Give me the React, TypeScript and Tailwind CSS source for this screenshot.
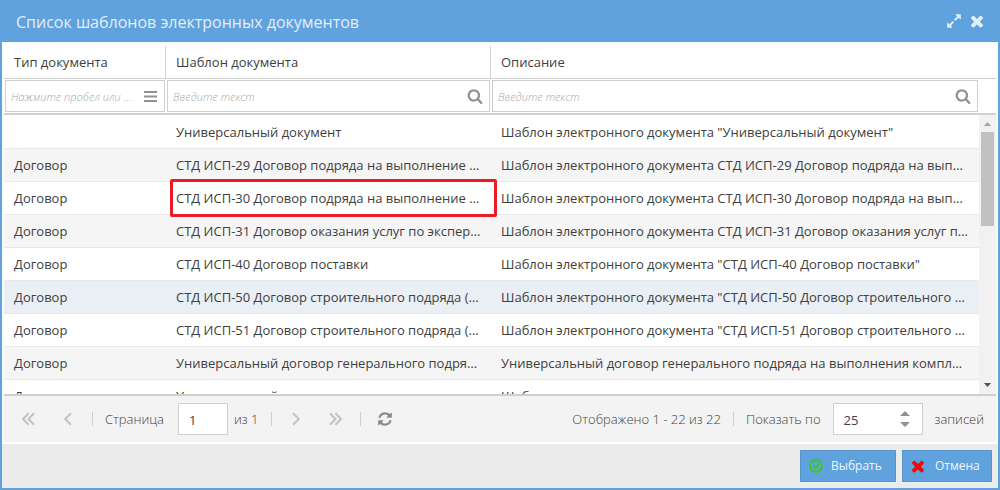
import React, { useState } from "react";
import clsx from "clsx";

interface Template {
  type: string;
  name: string;
  description: string;
}

const templates: Template[] = [
  {
    type: "",
    name: "Универсальный документ",
    description: 'Шаблон электронного документа "Универсальный документ"',
  },
  {
    type: "Договор",
    name: "СТД ИСП-29 Договор подряда на выполнение проектных работ",
    description: "Шаблон электронного документа СТД ИСП-29 Договор подряда на выполнение проектных работ",
  },
  {
    type: "Договор",
    name: "СТД ИСП-30 Договор подряда на выполнение проектных работ",
    description: "Шаблон электронного документа СТД ИСП-30 Договор подряда на выполнение проектных работ",
  },
  {
    type: "Договор",
    name: "СТД ИСП-31 Договор оказания услуг по экспертизе",
    description: "Шаблон электронного документа СТД ИСП-31 Договор оказания услуг по экспертизе",
  },
  {
    type: "Договор",
    name: "СТД ИСП-40 Договор поставки",
    description: 'Шаблон электронного документа "СТД ИСП-40 Договор поставки"',
  },
  {
    type: "Договор",
    name: "СТД ИСП-50 Договор строительного подряда (генподряд)",
    description: 'Шаблон электронного документа "СТД ИСП-50 Договор строительного подряда (генподряд)"',
  },
  {
    type: "Договор",
    name: "СТД ИСП-51 Договор строительного подряда (субподряд)",
    description: 'Шаблон электронного документа "СТД ИСП-51 Договор строительного подряда (субподряд)"',
  },
  {
    type: "Договор",
    name: "Универсальный договор генерального подряда",
    description: "Универсальный договор генерального подряда на выполнения комплекса работ",
  },
  {
    type: "Договор",
    name: "Универсальный договор",
    description: "Шаблон универсального договора",
  },
];

const MARKED_ROW = 2;

const icons = {
  search:
    "M1216 832q0-185-131.5-316.5t-316.5-131.5-316.5 131.5-131.5 316.5 131.5 316.5 316.5 131.5 316.5-131.5 131.5-316.5zm512 832q0 52-38 90t-90 38q-54 0-90-38l-343-342q-179 124-399 124-143 0-273.5-55.5t-225-150-150-225-55.5-273.5 55.5-273.5 150-225 225-150 273.5-55.5 273.5 55.5 225 150 150 225 55.5 273.5q0 220-124 399l343 343q37 37 37 90z",
  times:
    "M1490 1322q0 40-28 68l-136 136q-28 28-68 28t-68-28l-294-294-294 294q-28 28-68 28t-68-28l-136-136q-28-28-28-68t28-68l294-294-294-294q-28-28-28-68t28-68l136-136q28-28 68-28t68 28l294 294 294-294q28-28 68-28t68 28l136 136q28 28 28 68t-28 68l-294 294 294 294q28 28 28 68z",
  refresh:
    "M1639 1056q0 5-1 7-64 268-268 434.5t-478 166.5q-146 0-282.5-55t-243.5-157l-129 129q-19 19-45 19t-45-19-19-45v-448q0-26 19-45t45-19h448q26 0 45 19t19 45-19 45l-137 137q71 66 161 102t187 36q134 0 250-65t186-179q11-17 53-117 8-23 30-23h192q13 0 22.5 9.5t9.5 22.5zm25-800v448q0 26-19 45t-45 19h-448q-26 0-45-19t-19-45 19-45l138-138q-148-137-349-137-134 0-250 65t-186 179q-11 17-53 117-8 23-30 23h-199q-13 0-22.5-9.5t-9.5-22.5v-7q65-268 270-434.5t480-166.5q146 0 284 55.5t245 156.5l130-129q19-19 45-19t45 19 19 45z",
  expand:
    "M883 1056q0 13-10 23l-332 332 144 144q19 19 19 45t-19 45-45 19h-448q-26 0-45-19t-19-45v-448q0-26 19-45t45-19 45 19l144 144 332-332q10-10 23-10t23 10l114 114q10 10 10 23zm781-864v448q0 26-19 45t-45 19-45-19l-144-144-332 332q-10 10-23 10t-23-10l-114-114q-10-10-10-23t10-23l332-332-144-144q-19-19-19-45t19-45 45-19h448q26 0 45 19t19 45z",
};

const Icon: React.FC<{ name: keyof typeof icons; className?: string }> = ({ name, className }) => (
  <svg viewBox="0 0 1792 1792" fill="currentColor" className={className}>
    <path d={icons[name]} />
  </svg>
);

const Chevrons: React.FC<{ double?: boolean; right?: boolean }> = ({ double, right }) => (
  <svg
    viewBox="0 0 14 14"
    fill="none"
    stroke="currentColor"
    strokeWidth="2"
    className={clsx("size-3.5", right && "rotate-180")}
  >
    {double ? <path d="M7.500 1.200 2 7l5.500 5.800M13 1.200 7.500 7l5.500 5.800" /> : <path d="M10 1.200 4.200 7l5.800 5.800" />}
  </svg>
);

const Separator = () => <div className="h-3.5 w-px shrink-0 bg-[#cfcfcf]" />;

const PagerButton: React.FC<{ label: string; children: React.ReactNode }> = ({ label, children }) => (
  <button type="button" aria-label={label} className="flex size-8 items-center justify-center text-[#c3c3c3]">
    {children}
  </button>
);

const HeaderCell: React.FC<{ children: React.ReactNode; last?: boolean }> = ({ children, last }) => (
  <th
    className={clsx(
      "h-[33px] border-b border-[#cfd1d0] px-2.5 text-left leading-5 font-normal",
      !last && "border-r"
    )}
  >
    {children}
  </th>
);

const FilterCell: React.FC<{ label: string; placeholder: string; list?: boolean }> = ({
  label,
  placeholder,
  list,
}) => (
  <td className="border-b-2 border-[#cfd1d0] p-px">
    <div className="flex h-8 items-center border border-[#cfd1d0] pr-1.5 pl-[5px]">
      <input
        type="text"
        aria-label={label}
        placeholder={placeholder}
        className="min-w-0 flex-1 pt-0.5 text-[11px] leading-5 font-light text-ellipsis italic outline-none placeholder:text-[#a8a8a8]"
      />
      <button type="button" aria-label="Поиск" className="ml-3 shrink-0 text-[#919191]">
        {list ? (
          <svg viewBox="0 0 14 14" fill="currentColor" className="size-3.5">
            <path d="M0 2h13v2H0zM0 6.500h13v2H0zM0 11h13v2H0z" />
          </svg>
        ) : (
          <Icon name="search" className="size-4" />
        )}
      </button>
    </div>
  </td>
);

const App: React.FC = () => {
  const [page, setPage] = useState("1");
  const [pageSize, setPageSize] = useState(25);

  return (
    <div className="flex h-screen flex-col border-2 border-t-0 border-[#5fa2dd] bg-white font-['Open_Sans','Noto_Sans',sans-serif] text-[13px] leading-5 text-[#404040]">
      <header className="flex h-[42px] shrink-0 items-center gap-1.5 bg-[#5fa2dd] pr-3 pl-3.5 text-[#e3eef9]">
        <h1 className="flex-1 pt-0.5 text-base font-medium">Список шаблонов электронных документов</h1>
        <button type="button" aria-label="Развернуть">
          <Icon name="expand" className="size-4" />
        </button>
        <button type="button" aria-label="Закрыть">
          <Icon name="times" className="size-[18px]" />
        </button>
      </header>

      <main className="flex min-h-0 flex-1 flex-col px-0.5 pt-1 pb-0.5">
        <table className="w-full shrink-0 table-fixed border-separate border-spacing-0">
          <colgroup>
            <col className="w-[162px]" />
            <col className="w-[325px]" />
            <col />
            <col className="w-[17px]" />
          </colgroup>
          <thead>
            <tr>
              <HeaderCell>Тип документа</HeaderCell>
              <HeaderCell>Шаблон документа</HeaderCell>
              <HeaderCell last>Описание</HeaderCell>
              <td className="border-b border-[#cfd1d0]" />
            </tr>
            <tr>
              <FilterCell label="Тип документа" placeholder="Нажмите пробел или выберите" list />
              <FilterCell label="Шаблон документа" placeholder="Введите текст" />
              <FilterCell label="Описание" placeholder="Введите текст" />
              <td className="border-b-2 border-[#cfd1d0]" />
            </tr>
          </thead>
        </table>

        <div className="flex min-h-0 flex-1">
          <div className="min-w-0 flex-1 overflow-hidden pt-px">
            <table className="w-full table-fixed border-separate border-spacing-0">
              <colgroup>
                <col className="w-[162px]" />
                <col className="w-[325px]" />
                <col />
              </colgroup>
              <tbody>
                {templates.map((item, index) => (
                  <tr key={index} className={clsx(index === 5 ? "bg-[#e9eff4]" : index % 2 && "bg-[#f5f5f5]")}>
                    <td className="h-[33px] border-b border-[#e8e8e8] px-2.5">{item.type}</td>
                    <td className="relative h-[33px] border-b border-[#e8e8e8] px-2.5">
                      <div className="truncate">{item.name}</div>
                      {index === MARKED_ROW && (
                        <div className="absolute -top-[3px] -right-1.5 -bottom-[3px] left-1 z-10 rounded-xs border-3 border-[#ed1c24]" />
                      )}
                    </td>
                    <td className="h-[33px] border-b border-[#e8e8e8] px-2.5">
                      <div className="truncate">{item.description}</div>
                    </td>
                  </tr>
                ))}
              </tbody>
            </table>
          </div>
          <div className="flex w-[17px] flex-col items-center bg-[#f1f1f1]">
            <svg viewBox="0 0 17 17" className="size-[17px] shrink-0 fill-[#a3a3a3]">
              <path d="M5 11h7L8.500 7z" />
            </svg>
            <div className="h-[94px] w-[13px] bg-[#c1c1c1]" />
            <svg viewBox="0 0 17 17" className="mt-auto size-[17px] shrink-0 fill-[#505050]">
              <path d="M5 6h7L8.500 10z" />
            </svg>
          </div>
        </div>

        <div className="flex h-12 shrink-0 items-center border-t-2 border-[#cfcfcf] bg-[#f3f3f3] px-2 font-light text-[#404040]">
          <PagerButton label="Первая страница">
            <Chevrons double />
          </PagerButton>
          <div className="w-2" />
          <PagerButton label="Предыдущая страница">
            <Chevrons />
          </PagerButton>
          <div className="w-2" />
          <Separator />
          <label htmlFor="page" className="ml-3 w-[73px]">
            Страница
          </label>
          <input
            id="page"
            value={page}
            onChange={(e) => setPage(e.target.value)}
            className="h-8 w-[50px] border border-[#cfcfcf] bg-white px-2.5 pt-0.5 font-normal text-[#404040] outline-none"
          />
          <span className="ml-1.5 w-[37px]">из 1</span>
          <Separator />
          <div className="w-2" />
          <PagerButton label="Следующая страница">
            <Chevrons right />
          </PagerButton>
          <div className="w-2" />
          <PagerButton label="Последняя страница">
            <Chevrons double right />
          </PagerButton>
          <div className="w-2" />
          <Separator />
          <button type="button" aria-label="Обновить" className="ml-4 text-[#8a8a8a]">
            <Icon name="refresh" className="size-4" />
          </button>
          <span className="mr-3 ml-auto">Отображено 1 - 22 из 22</span>
          <Separator />
          <label htmlFor="page-size" className="mr-3 ml-3">
            Показать по
          </label>
          <div className="mr-3 flex h-8 w-[90px] items-center border border-[#cfcfcf] bg-white pr-3 pl-2.5">
            <input
              id="page-size"
              value={pageSize}
              onChange={(e) => setPageSize(Number(e.target.value) || 0)}
              className="min-w-0 flex-1 pt-0.5 font-normal text-[#404040] outline-none"
            />
            <div className="flex flex-col gap-1.5 text-[#919191]">
              <button type="button" aria-label="Больше" onClick={() => setPageSize(pageSize + 1)}>
                <svg viewBox="0 0 10 5" fill="currentColor" className="h-[5px] w-2.5">
                  <path d="M0 5h10L5 0z" />
                </svg>
              </button>
              <button type="button" aria-label="Меньше" onClick={() => setPageSize(pageSize - 1)}>
                <svg viewBox="0 0 10 5" fill="currentColor" className="h-[5px] w-2.5">
                  <path d="M0 0h10L5 5z" />
                </svg>
              </button>
            </div>
          </div>
          <span className="mr-1">записей</span>
        </div>
      </main>

      <footer className="flex h-11 shrink-0 items-center justify-end gap-1.5 bg-[#ebebeb] px-1.5">
        <button
          type="button"
          className="flex h-8 w-24 items-center gap-2 border border-[#5795cb] bg-[#5fa2dd] pl-2 text-xs font-medium text-[#f0f6fc]"
        >
          <svg viewBox="0 0 14 14" fill="none" stroke="#3fc22f" strokeWidth="2" className="size-3.5">
            <circle cx="7" cy="7" r="6" />
            <path strokeWidth="2.4" d="m4.200 6.600 2.300 2.200 3.500-3.500" />
          </svg>
          Выбрать
        </button>
        <button
          type="button"
          className="flex h-8 w-[90px] items-center gap-2 border border-[#5795cb] bg-[#5fa2dd] pl-1.5 text-xs font-medium text-[#f0f6fc]"
        >
          <Icon name="times" className="size-[18px] text-[#f00]" />
          Отмена
        </button>
      </footer>
    </div>
  );
};

export default App;
